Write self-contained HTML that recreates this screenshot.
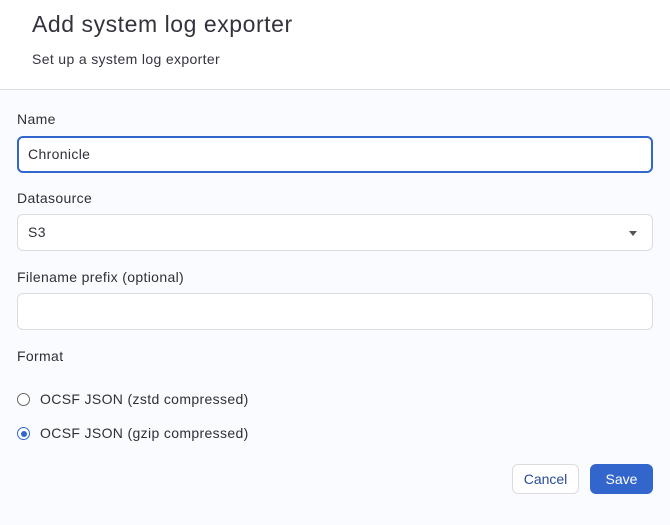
<!DOCTYPE html>
<html><head><style>
*{box-sizing:border-box;margin:0;padding:0}
body{width:670px;height:525px;background:#fafbfe;font-family:"Liberation Sans",sans-serif;color:#2f2f38;position:relative;overflow:hidden;letter-spacing:0.35px}
.hdr{position:absolute;left:0;top:0;width:670px;height:90px;background:#fff;border-bottom:1px solid #dcdce0}
.t{position:absolute;left:32px;top:11px;font-size:23px;color:#33333d;letter-spacing:0.55px}
.st{position:absolute;left:32px;top:51px;font-size:14px;color:#33333d}
.lbl{position:absolute;left:17px;font-size:14px;color:#2f2f38}
.in{position:absolute;left:17px;width:636px;height:37px;background:#fff;border:1px solid #dcdce0;border-radius:6px;font-size:14px;padding-left:10px;line-height:35px}
.foc{border:2px solid #3366cc;padding-left:9px;line-height:33px}
.arr{position:absolute;right:15px;top:16px;border-left:4px solid transparent;border-right:4px solid transparent;border-top:5px solid #555}
.r{position:absolute;left:17px;width:13px;height:13px;border-radius:50%;border:1px solid #666;background:#fff}
.r.on{border-color:#3366cc}
.r.on::after{content:"";position:absolute;left:2.5px;top:2.5px;width:6px;height:6px;border-radius:50%;background:#3366cc}
.rl{position:absolute;left:40px;font-size:14px;color:#2f2f38}
.btn{position:absolute;top:464px;height:30px;border-radius:6px;font-size:14px;text-align:center;line-height:28px;letter-spacing:0}
</style></head><body>
<div class="hdr"><div class="t">Add system log exporter</div><div class="st">Set up a system log exporter</div></div>
<div class="lbl" style="top:111px">Name</div>
<div class="in foc" style="top:136px">Chronicle</div>
<div class="lbl" style="top:190px">Datasource</div>
<div class="in" style="top:214px">S3<div class="arr"></div></div>
<div class="lbl" style="top:269px">Filename prefix (optional)</div>
<div class="in" style="top:293px"></div>
<div class="lbl" style="top:348px">Format</div>
<div class="r" style="top:393px"></div><div class="rl" style="top:391px">OCSF JSON (zstd compressed)</div>
<div class="r on" style="top:427px"></div><div class="rl" style="top:425px">OCSF JSON (gzip compressed)</div>
<div class="btn" style="left:512px;width:67px;background:#fff;border:1px solid #dcdce0;color:#2a4a9a">Cancel</div>
<div class="btn" style="left:590px;width:63px;background:#3366cc;border:1px solid #3366cc;color:#fff">Save</div>
</body></html>
